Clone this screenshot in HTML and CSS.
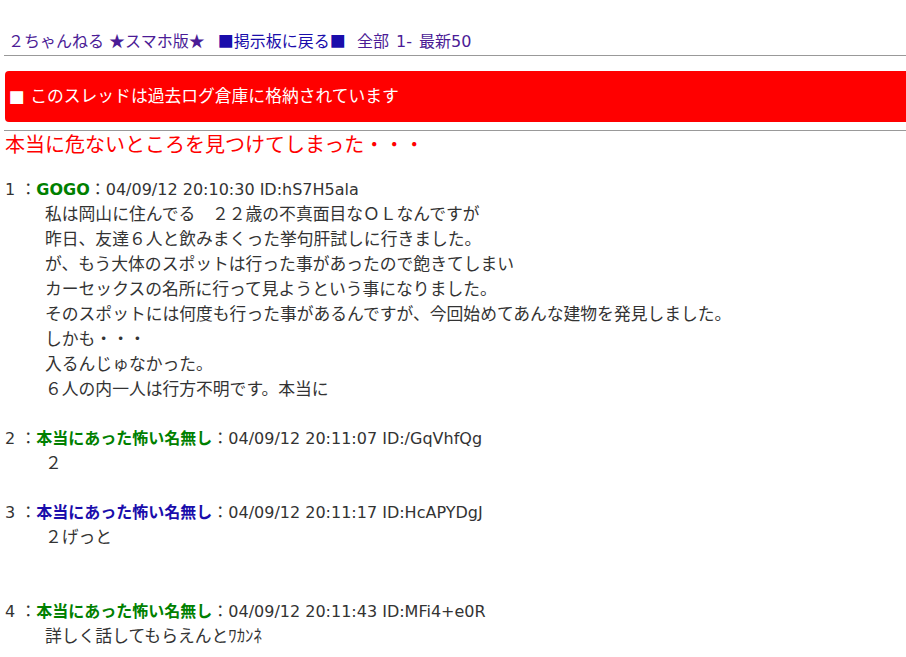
FILE: index.html
```html
<!DOCTYPE html>
<html lang="ja">
<head>
    <meta charset="UTF-8">
    <meta name="viewport" content="width=device-width, initial-scale=1.0">
    <title>本当に危ないところを見つけてしまった・・・</title>
    <link rel="stylesheet" href="styles.css">
</head>
<body>
    <div class="menu">
        <a href="#" class="visited">２ちゃんねる <span class="sym">★</span>スマホ版<span class="sym">★</span></a>
        <a href="#" class="board"><span class="sym">■</span>掲示板に戻る<span class="sym">■</span></a>
        <a href="#" class="visited">全部</a>
        <a href="#" class="visited">1-</a>
        <a href="#" class="visited">最新50</a>
    </div>
    <div class="rule"></div>

    <div class="stop">■ このスレッドは過去ログ倉庫に格納されています</div>
    <div class="rule rule-under"></div>

    <h1 class="title">本当に危ないところを見つけてしまった・・・</h1>

    <dl class="thread">
        <dt>1 ：<b class="name">GOGO</b>：04/09/12 20:10:30 ID:hS7H5ala</dt>
        <dd>私は岡山に住んでる　２２歳の不真面目なＯＬなんですが<br>
            昨日、友達６人と飲みまくった挙句肝試しに行きました。<br>
            が、もう大体のスポットは行った事があったので飽きてしまい<br>
            カーセックスの名所に行って見ようという事になりました。<br>
            そのスポットには何度も行った事があるんですが、今回始めてあんな建物を発見しました。<br>
            しかも・・・<br>
            入るんじゅなかった。<br>
            ６人の内一人は行方不明です。本当に</dd>

        <dt>2 ：<b class="name">本当にあった怖い名無し</b>：04/09/12 20:11:07 ID:/GqVhfQg</dt>
        <dd>２</dd>

        <dt>3 ：<a href="#" class="name mail">本当にあった怖い名無し</a>：04/09/12 20:11:17 ID:HcAPYDgJ</dt>
        <dd>２げっと<br><br></dd>

        <dt>4 ：<b class="name">本当にあった怖い名無し</b>：04/09/12 20:11:43 ID:MFi4+e0R</dt>
        <dd>詳しく話してもらえんとﾜｶﾝﾈ</dd>
    </dl>
</body>
</html>
```

FILE: styles.css
```css
body {
    margin: 0;
    font-family: "DejaVu Sans", "Noto Sans CJK JP", sans-serif;
    font-size: 16px;
    color: #333;
    overflow-x: hidden;
}
a {
    text-decoration: none;
}
.menu {
    padding: 30px 0 0 8px;
    height: 20px;
    line-height: 20px;
}
.menu a {
    color: #4b1c96;
    margin-right: 2px;
}
.menu a.board {
    margin: 0 6px 0 6px;
    color: #1a0dab;
}
.menu .sym {
    font-family: "Noto Sans CJK JP", sans-serif;
}
.rule {
    margin: 5px 0 0 4px;
    border-top: 1px solid #999;
}
.rule-under {
    margin-top: 8px;
}
.stop {
    margin: 15px -20px 0 5px;
    padding-left: 4px;
    height: 51px;
    line-height: 51px;
    background: #f00;
    color: #fff;
    font-size: 16.8px;
    border-radius: 4px;
}
.title {
    margin: 1px 0 0 5px;
    font-family: "Noto Sans CJK JP", sans-serif;
    font-size: 20px;
    font-weight: normal;
    line-height: 24px;
    color: #f00;
}
.thread {
    margin: 21px 0 0 5px;
}
.thread dt {
    line-height: 25px;
}
.thread dd {
    margin: 0 0 24px 40px;
    line-height: 25px;
    font-size: 16.8px;
}
.name {
    color: #008000;
    font-weight: bold;
}
.mail {
    color: #1a0dab;
}
```
